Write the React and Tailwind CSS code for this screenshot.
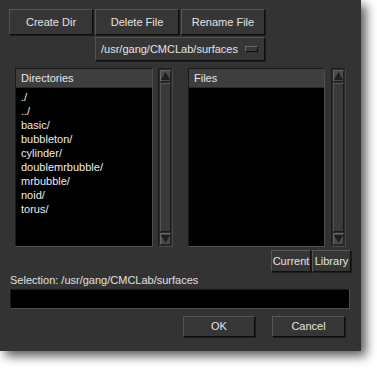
import React from "react";

const font = { fontFamily: '"Liberation Sans", Arial, sans-serif' };

function Btn({ children, className = "" }) {
  return (
    <div
      className={
        "flex items-center justify-center bg-[#363636] text-[#e4e4e4] text-[11px] border border-t-[#555555] border-l-[#555555] border-b-[#0e0e0e] border-r-[#0e0e0e] shadow-[1px_1px_0_#1c1c1c] " +
        className
      }
    >
      {children}
    </div>
  );
}

function Scroll({ className = "" }) {
  return (
    <div
      className={
        "flex flex-col border border-t-[#1e1e1e] border-l-[#1e1e1e] border-b-[#4a4a4a] border-r-[#4a4a4a] bg-[#2a2a2a] p-[1px] " +
        className
      }
    >
      <div className="h-[12px] bg-[#4a4a4a] border border-t-[#666] border-l-[#666] border-b-[#222] border-r-[#222] flex items-center justify-center">
        <svg width="9" height="8" viewBox="0 0 9 8">
          <polygon points="4.5,0 9,8 0,8" fill="#1e1e1e" />
        </svg>
      </div>
      <div className="flex-1 my-[1px] bg-[#3a3a3a] border border-t-[#555] border-l-[#555] border-b-[#1a1a1a] border-r-[#1a1a1a]" />
      <div className="h-[12px] bg-[#4a4a4a] border border-t-[#666] border-l-[#666] border-b-[#222] border-r-[#222] flex items-center justify-center">
        <svg width="9" height="8" viewBox="0 0 9 8">
          <polygon points="0,0 9,0 4.5,8" fill="#1e1e1e" />
        </svg>
      </div>
    </div>
  );
}

function List({ title, items = [], className = "" }) {
  return (
    <div
      className={
        "flex flex-col bg-black border border-t-[#1a1a1a] border-l-[#1a1a1a] border-b-[#4e4e4e] border-r-[#4e4e4e] " +
        className
      }
    >
      <div className="h-[19px] bg-[#3e3e3e] border-b border-b-[#2a2a2a] text-[#e8e8e8] text-[11px] leading-[19px] pl-[5px]">
        {title}
      </div>
      <div className="pt-[2px] pl-[5px]">
        {items.map((it) => (
          <div key={it} className="h-[14px] leading-[14px] text-[11px] text-[#ececec]">
            {it}
          </div>
        ))}
      </div>
    </div>
  );
}

export default function App() {
  return (
    <div className="w-[377px] h-[368px] bg-white" style={font}>
      <div className="w-[361px] h-[351px] bg-[#333333] flex flex-col pt-[9px] shadow-[5px_5px_10px_rgba(0,0,0,0.65)]">
        <div className="flex ml-[9px] gap-[2px] h-[26px]">
          <Btn className="w-[84px]">Create Dir</Btn>
          <Btn className="w-[84px]">Delete File</Btn>
          <Btn className="w-[84px]">Rename File</Btn>
        </div>
        <div className="ml-[95px] mt-[2px] w-[170px] h-[24px] flex items-center bg-[#363636] text-[#e4e4e4] text-[11px] border border-t-[#555555] border-l-[#555555] border-b-[#0e0e0e] border-r-[#0e0e0e] shadow-[1px_1px_0_#1c1c1c]">
          <span className="ml-[5px]">/usr/gang/CMCLab/surfaces</span>
          <div className="ml-auto mr-[6px] w-[13px] h-[6px] bg-[#3a3a3a] border border-t-[#666] border-l-[#666] border-b-[#0e0e0e] border-r-[#0e0e0e]" />
        </div>
        <div className="flex mt-[7px] h-[179px]">
          <List
            title="Directories"
            className="ml-[15px] w-[138px]"
            items={["./", "../", "basic/", "bubbleton/", "cylinder/", "doublemrbubble/", "mrbubble/", "noid/", "torus/"]}
          />
          <Scroll className="ml-[5px] w-[15px]" />
          <List title="Files" className="ml-[15px] w-[137px]" />
          <Scroll className="ml-[6px] w-[15px]" />
        </div>
        <div className="flex mt-[3px] h-[22px] ml-[271px]">
          <Btn className="w-[40px]">Current</Btn>
          <Btn className="w-[39px] ml-[1px]">Library</Btn>
        </div>
        <div className="ml-[10px] mt-[1px] h-[14px] leading-[14px] text-[11px] text-[#e0e0e0]">
          Selection: /usr/gang/CMCLab/surfaces
        </div>
        <div className="ml-[10px] mt-[2px] w-[340px] h-[20px] bg-black border border-t-[#1a1a1a] border-l-[#1a1a1a] border-b-[#4e4e4e] border-r-[#4e4e4e]" />
        <div className="flex mt-[7px] h-[21px]">
          <Btn className="ml-[183px] w-[72px]">OK</Btn>
          <Btn className="ml-[17px] w-[73px]">Cancel</Btn>
        </div>
      </div>
    </div>
  );
}
